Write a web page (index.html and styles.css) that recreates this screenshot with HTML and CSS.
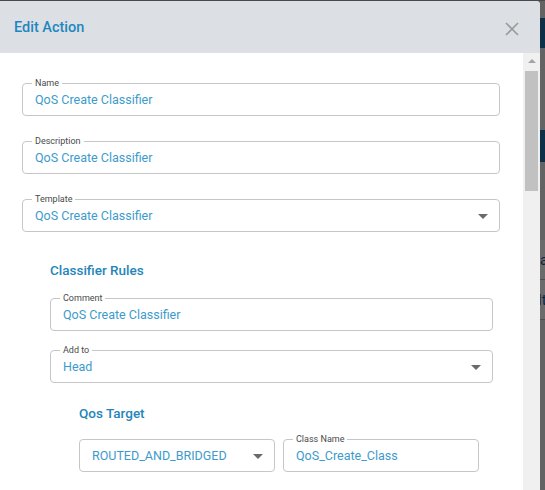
FILE: index.html
```html
<!DOCTYPE html>
<html>
<head>
<meta charset="utf-8">
<link rel="stylesheet" href="styles.css">
</head>
<body>
<div class="backdrop">
  <div class="bd-gap bd-top"></div>
  <div class="bd-bar"></div>
  <div class="bd-gap bd-mid"></div>
  <div class="bd-bar bd-bar2"></div>
  <div class="bd-gap bd-mid2"></div>
  <div class="bd-row">a</div>
  <div class="bd-row bd-row2">lt</div>
</div>
<div class="modal">
  <header class="modal-head">
    <h2 class="modal-title">Edit Action</h2>
    <button class="close" aria-label="Close">
      <svg width="14" height="14" viewBox="0 0 14 14"><path d="M1 1L13 13M13 1L1 13" stroke="#9a9a9a" stroke-width="1.6" fill="none"/></svg>
    </button>
  </header>
  <div class="modal-body">
    <div class="content">
      <div class="field"><span class="label">Name</span><span class="value">QoS Create Classifier</span></div>
      <div class="field"><span class="label">Description</span><span class="value">QoS Create Classifier</span></div>
      <div class="field select"><span class="label">Template</span><span class="value">QoS Create Classifier</span><span class="caret"></span></div>
      <section class="group">
        <h3 class="group-title">Classifier Rules</h3>
        <div class="field gfield"><span class="label">Comment</span><span class="value">QoS Create Classifier</span></div>
        <div class="field gfield select"><span class="label">Add to</span><span class="value">Head</span><span class="caret"></span></div>
        <section class="group sub">
          <h3 class="group-title">Qos Target</h3>
          <div class="row">
            <div class="field half select"><span class="value">ROUTED_AND_BRIDGED</span><span class="caret"></span></div>
            <div class="field half"><span class="label">Class Name</span><span class="value">QoS_Create_Class</span></div>
          </div>
        </section>
      </section>
    </div>
    <div class="scrollbar">
      <span class="sb-arrow"></span>
      <span class="sb-thumb"></span>
    </div>
  </div>
</div>
</body>
</html>
```
FILE: styles.css
```css
* { box-sizing: border-box; }
html, body { margin: 0; padding: 0; }
body {
  width: 545px;
  height: 490px;
  overflow: hidden;
  background: #636363;
  font-family: Roboto, "Liberation Sans", sans-serif;
  position: relative;
}
.backdrop {
  display: flex;
  flex-direction: column;
  border-top: 1px solid #4a4a4a;
}
.bd-top { height: 17px; }
.bd-bar { height: 30px; background: #0e3047; }
.bd-mid { height: 82px; }
.bd-bar2 { height: 32px; }
.bd-mid2 { height: 78px; }
.bd-row {
  height: 40px;
  background: #6b6b6b;
  border-bottom: 1px solid #4e4e4e;
  color: #10233a;
  font-size: 15px;
  line-height: 40px;
  padding-left: 540px;
  white-space: nowrap;
}
.bd-row2 { padding-left: 538px; }

.modal {
  position: absolute;
  top: 1px;
  left: 0;
  width: 540px;
  height: 500px;
  background: #fff;
  border-top-right-radius: 4px;
  overflow: hidden;
  display: flex;
  flex-direction: column;
}
.modal-head {
  height: 52px;
  flex: none;
  background: #dce0e4;
  display: flex;
  align-items: center;
  justify-content: space-between;
  padding: 0 21px 0 14px;
}
.modal-title {
  margin: 0;
  font-size: 14.5px;
  font-weight: 500;
  color: #1f87bf;
  line-height: 20px;
  padding-top: 1px;
}
.close {
  border: 0;
  background: none;
  padding: 0;
  width: 14px;
  height: 14px;
  margin-top: 4px;
  display: flex;
}
.modal-body {
  flex: 1;
  display: flex;
  min-height: 0;
}
.content {
  width: 523px;
  padding: 30px 23px 0 22px;
  overflow: hidden;
}
.field {
  position: relative;
  height: 33px;
  border: 1px solid #c6c6c6;
  border-radius: 4px;
  margin-bottom: 25px;
  display: flex;
  align-items: center;
  padding: 0 12px;
}
.label {
  position: absolute;
  left: 9px;
  top: -7px;
  background: #fff;
  padding: 0 3px;
  font-size: 9px;
  line-height: 12px;
  color: #4a4a4a;
}
.value {
  font-size: 12.5px;
  color: #3d9bcb;
  line-height: 16px;
  padding-top: 1px;
}
.caret {
  position: absolute;
  right: 11px;
  top: 14px;
  width: 0;
  height: 0;
  border-left: 5px solid transparent;
  border-right: 5px solid transparent;
  border-top: 5px solid #6a6a6a;
}
.group {
  padding: 3px 7px 0 28px;
}
.group-title {
  margin: 0 0 18px;
  font-size: 13.5px;
  font-weight: 500;
  line-height: 20px;
  color: #2585ba;
}
.gfield { margin-bottom: 19px; }
.sub { padding: 1px 0 0 29px; }
.sub .group-title { margin: 0 0 16px; }
.row {
  display: flex;
  gap: 8px;
}
.half {
  width: 196px;
  margin-bottom: 0;
}
.scrollbar {
  width: 17px;
  background: #f0f0f0;
  position: relative;
  display: flex;
  flex-direction: column;
  align-items: center;
}
.sb-arrow {
  margin-top: 6px;
  width: 0;
  height: 0;
  border-left: 4px solid transparent;
  border-right: 4px solid transparent;
  border-bottom: 4px solid #a3a3a3;
}
.sb-thumb {
  margin-top: 8px;
  width: 13px;
  height: 120px;
  background: #c1c1c1;
}
```
